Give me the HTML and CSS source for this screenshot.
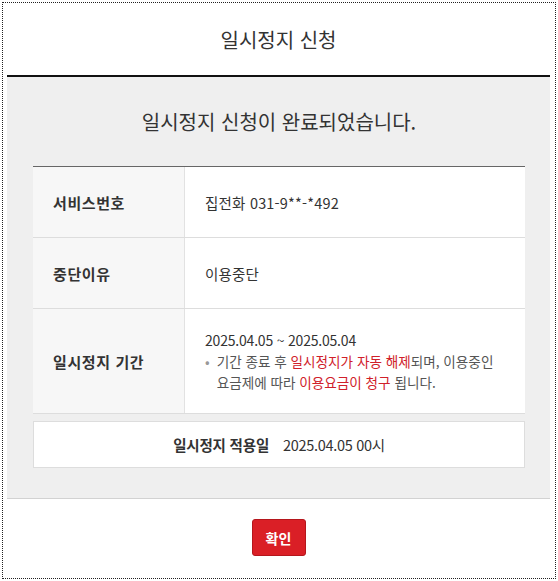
FILE: index.html
```html
<!DOCTYPE html>
<html lang="ko">
<head>
<meta charset="utf-8">
<link rel="stylesheet" href="styles.css">
</head>
<body>
<div class="frame">
  <div class="dialog">
    <header class="dlg-head">
      <h1 class="dlg-title">일시정지 신청</h1>
    </header>
    <section class="dlg-body">
      <h2 class="done-msg">일시정지 신청이 완료되었습니다.</h2>
      <div class="info">
        <div class="row">
          <div class="label">서비스번호</div>
          <div class="value">집전화 031-9**-*492</div>
        </div>
        <div class="row">
          <div class="label">중단이유</div>
          <div class="value">이용중단</div>
        </div>
        <div class="row tall">
          <div class="label">일시정지 기간</div>
          <div class="value">
            <div class="period">2025.04.05 ~ 2025.05.04</div>
            <p class="note"><span class="dot">•</span><span>기간 종료 후 <em>일시정지가 자동 해제</em>되며, 이용중인<br>요금제에 따라 <em>이용요금이 청구</em> 됩니다.</span></p>
          </div>
        </div>
      </div>
      <div class="apply">
        <strong>일시정지 적용일</strong>
        <span>2025.04.05 00시</span>
      </div>
    </section>
    <footer class="dlg-foot">
      <button class="btn-ok" type="button">확인</button>
    </footer>
  </div>
</div>
</body>
</html>
```
FILE: styles.css
```css
* { box-sizing: border-box; }
html, body { margin: 0; padding: 0; background: #fff; }
body {
  padding: 2px;
  font-family: "Noto Sans CJK KR", "Noto Sans", sans-serif;
  color: #333;
}
.frame {
  width: 554px;
  height: 577px;
  border: 1px dotted #222;
  padding: 0 5px 0 4px;
}
.dialog { display: flex; flex-direction: column; }
.dlg-head {
  height: 74px;
  border-bottom: 2px solid #111;
  display: flex;
  align-items: center;
  justify-content: center;
}
.dlg-title {
  margin: 0;
  font-size: 20px;
  font-weight: 400;
  color: #333;
  letter-spacing: 0;
}
.dlg-body {
  background: #efefef;
  border-bottom: 1px solid #d2d2d2;
  padding: 30px 25px 30px 26px;
}
.done-msg {
  margin: 0 0 29px;
  text-align: center;
  font-size: 20px;
  font-weight: 400;
  line-height: 30px;
  color: #333;
  letter-spacing: 0;
}
.info { border-top: 1px solid #666; }
.row {
  display: grid;
  grid-template-columns: 152px 1fr;
  min-height: 71px;
  border-bottom: 1px solid #ddd;
}
.row.tall { min-height: 105px; }
.label {
  background: #f7f7f7;
  border-right: 1px solid #e2e2e2;
  padding-left: 20px;
  display: flex;
  align-items: center;
  font-size: 15px;
  font-weight: 700;
  color: #333;
  letter-spacing: 0.6px;
}
.value {
  background: #fff;
  padding-left: 20px;
  display: flex;
  flex-direction: column;
  justify-content: center;
  font-size: 14.5px;
  letter-spacing: 0.2px;
  color: #333;
}
.period { font-size: 14px; line-height: 20px; letter-spacing: -0.2px; }
.note {
  margin: 1px 0 0;
  display: flex;
  gap: 7px;
  font-size: 13.6px;
  line-height: 21px;
  color: #555;
  letter-spacing: 0;
}
.dot { color: #999; }
.note em { font-style: normal; color: #d0202a; }
.apply {
  margin-top: 7px;
  height: 47px;
  background: #fff;
  border: 1px solid #ddd;
  display: flex;
  align-items: center;
  justify-content: center;
  gap: 14px;
  font-size: 14.5px;
  color: #333;
}
.apply strong { font-weight: 700; letter-spacing: -0.2px; }
.apply span { letter-spacing: -0.3px; }
.dlg-foot {
  display: flex;
  justify-content: center;
  padding-top: 20px;
}
.btn-ok {
  width: 54px;
  height: 37px;
  background: #da1f26;
  border: 1px solid #b5161c;
  border-radius: 3px;
  color: #fff;
  font-family: inherit;
  font-size: 14px;
  font-weight: 700;
  padding: 0;
}
```
